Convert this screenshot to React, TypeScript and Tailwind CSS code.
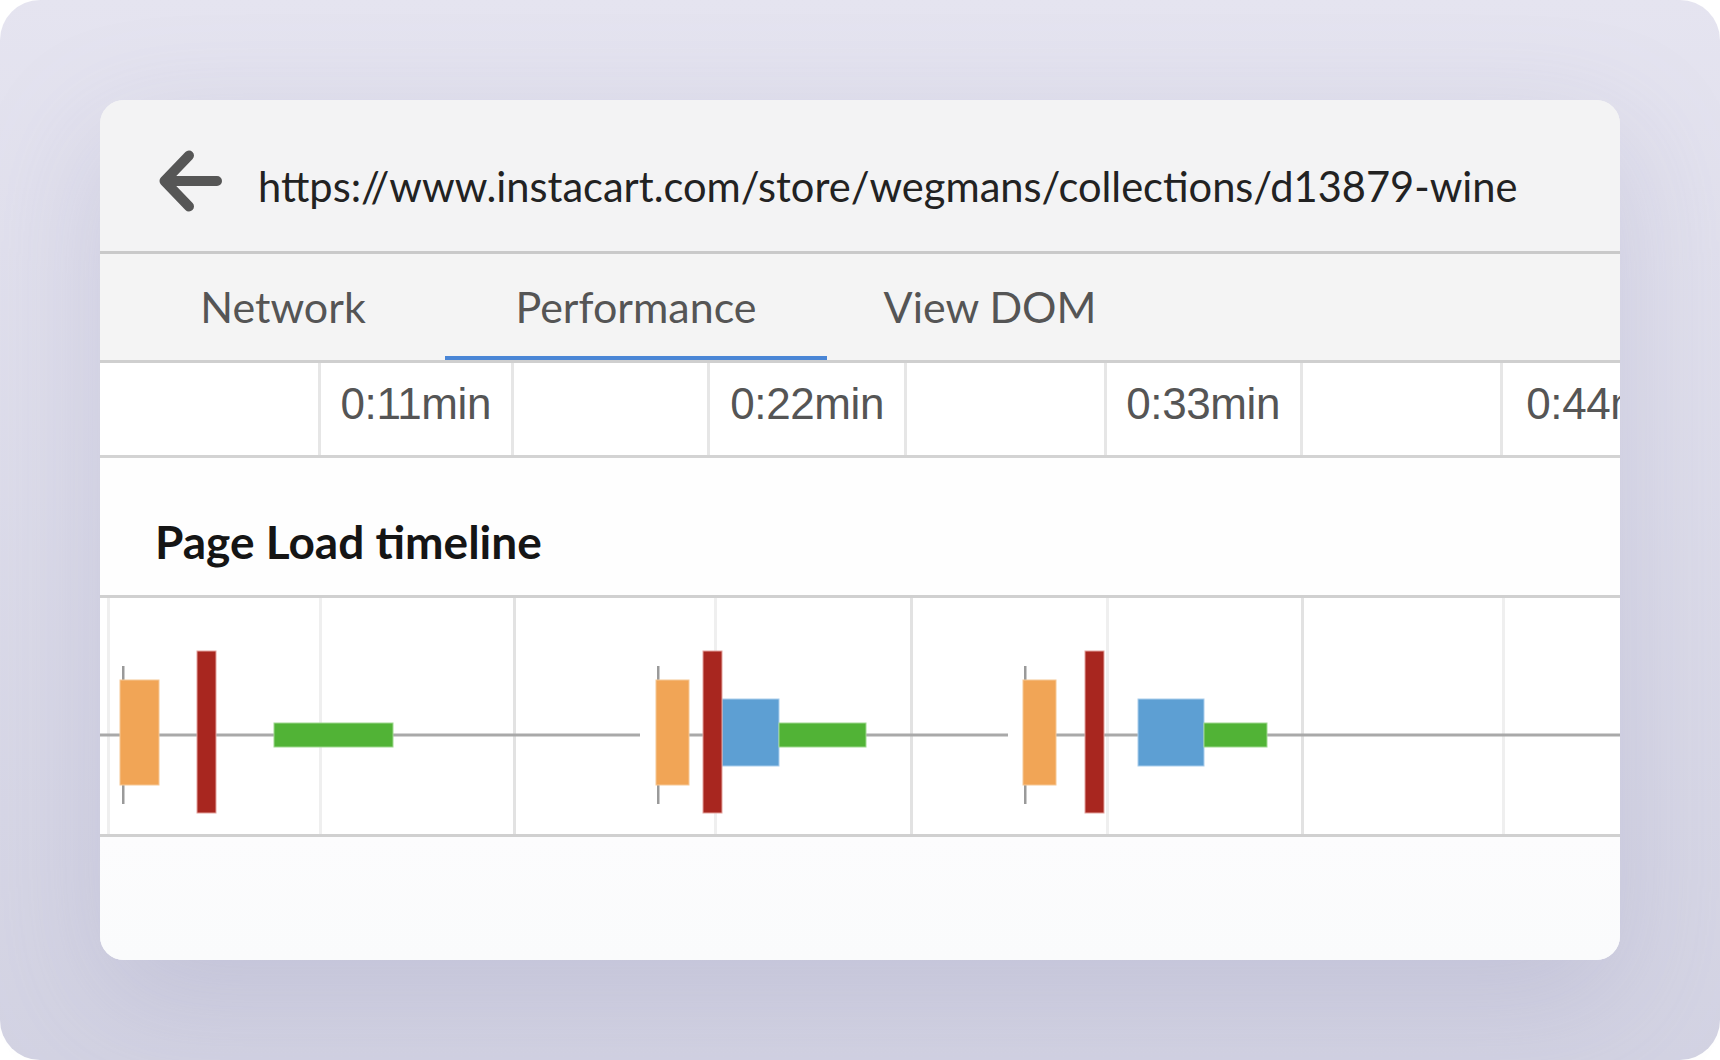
import React from "react";

const gridX = [8, 220, 414, 615, 811, 1007, 1202, 1403];
const darkGrid = new Set([414, 811, 1202]);

type Group = {
  whisker: number;
  orange: [number, number];
  red: [number, number];
  blue?: [number, number];
  green: [number, number];
};

const groups: Group[] = [
  { whisker: 23, orange: [20, 59], red: [97, 116], green: [174, 293] },
  { whisker: 558, orange: [556, 589], red: [603, 622], blue: [622, 679], green: [679, 766] },
  { whisker: 925, orange: [923, 956], red: [985, 1004], blue: [1038, 1104], green: [1104, 1167] },
];

function Chart() {
  return (
    <svg width="1520" height="236" viewBox="0 0 1520 236" className="block">
      {gridX.map((x) => (
        <rect key={x} x={x - 1} y={0} width={3} height={236} fill={darkGrid.has(x) ? "#e2e2e2" : "#efefef"} />
      ))}
      <rect x={0} y={135.5} width={540} height={3} fill="#a9a9a9" />
      <rect x={556} y={135.5} width={352} height={3} fill="#a9a9a9" />
      <rect x={923} y={135.5} width={597} height={3} fill="#a9a9a9" />
      {groups.map((g, i) => (
        <g key={i}>
          <rect x={g.whisker - 1} y={68} width={2.5} height={138} fill="#9a9a9a" />
          <rect x={g.orange[0]} y={82} width={g.orange[1] - g.orange[0]} height={105} fill="#f1a556" stroke="#f6c794" strokeWidth={1} />
          {g.blue && (
            <rect x={g.blue[0]} y={101} width={g.blue[1] - g.blue[0]} height={67} fill="#5d9fd3" stroke="#a9cdec" strokeWidth={1} />
          )}
          <rect x={g.green[0]} y={125} width={g.green[1] - g.green[0]} height={24} fill="#51b336" stroke="#9fd88f" strokeWidth={1} />
          <rect x={g.red[0]} y={53} width={g.red[1] - g.red[0]} height={162} fill="#a8261f" stroke="#e3a29d" strokeWidth={1} />
        </g>
      ))}
    </svg>
  );
}

const axisCells: { w: string; label?: string }[] = [
  { w: "w-[221px]" },
  { w: "w-[193px]", label: "0:11min" },
  { w: "w-[196px]" },
  { w: "w-[197px]", label: "0:22min" },
  { w: "w-[200px]" },
  { w: "w-[196px]", label: "0:33min" },
  { w: "w-[200px]" },
  { w: "w-[197px]", label: "0:44min" },
];

export default function App() {
  return (
    <div className="w-[1720px] h-[1060px] bg-white">
      <div className="w-full h-full rounded-[40px] bg-gradient-to-b from-[#e5e4f0] to-[#d3d3e3] pl-[100px] pt-[100px]">
        <div className="w-[1520px] h-[860px] rounded-[24px] overflow-hidden flex flex-col bg-gradient-to-b from-[#f3f3f4] to-[#fbfbfd] shadow-[0_40px_120px_rgba(140,140,180,0.25)]">
          {/* Header */}
          <div className="h-[151px] shrink-0 flex items-start pl-[59px] bg-[#f3f3f4]">
            <svg width="64" height="62" viewBox="0 0 64 62" className="shrink-0 mt-[50px]">
              <path d="M58 31 H7 M30 5.5 L5.5 31 L30 56.5" fill="none" stroke="#565656" strokeWidth="10" strokeLinecap="round" strokeLinejoin="round" />
            </svg>
            <div className="ml-[35px] mt-[66px] text-[41.6px] leading-none text-[#222] font-['Lato','Liberation_Sans',sans-serif] whitespace-nowrap">
              https://www.instacart.com/store/wegmans/collections/d13879-wine
            </div>
          </div>
          <div className="h-[3px] shrink-0 bg-[#c9c9c9]" />
          {/* Tabs */}
          <div className="h-[106px] shrink-0 bg-[#f4f4f4] flex pl-[21px] font-['Lato','Liberation_Sans',sans-serif] text-[43px] text-[#555]">
            <div className="w-[324px] flex items-center justify-center pt-[1px]">Network</div>
            <div className="w-[382px] flex flex-col">
              <div className="flex-1 flex items-center justify-center pt-[5px]">Performance</div>
              <div className="h-[4px] bg-[#4a86d6]" />
            </div>
            <div className="w-[326px] flex items-center justify-center pt-[1px]">View DOM</div>
          </div>
          <div className="h-[3px] shrink-0 bg-[#cfcfcf]" />
          {/* Axis */}
          <div className="h-[92px] shrink-0 bg-white flex font-['Liberation_Sans','Arial',sans-serif] text-[44px] text-[#555] tracking-[-0.4px] overflow-hidden">
            {axisCells.map((c, i) => (
              <div
                key={i}
                className={`${c.w} shrink-0 h-full flex items-center justify-end pr-[20px] pb-[10px] ${i < axisCells.length - 1 ? "border-r-[3px] border-[#e6e6e6]" : ""}`}
              >
                {c.label ? <span className="whitespace-nowrap">{c.label}</span> : null}
              </div>
            ))}
          </div>
          <div className="h-[3px] shrink-0 bg-[#d3d3d3]" />
          {/* Title */}
          <div className="h-[137px] shrink-0 bg-[#fefefe] pl-[55px] pt-[61px]">
            <div className="font-['Lato','Liberation_Sans',sans-serif] font-bold text-[46px] leading-none text-[#151515]">
              Page Load timeline
            </div>
          </div>
          <div className="h-[3px] shrink-0 bg-[#d0d0d0]" />
          {/* Chart */}
          <div className="h-[236px] shrink-0 bg-white">
            <Chart />
          </div>
          <div className="h-[3px] shrink-0 bg-[#d0d0d0]" />
          <div className="flex-1 bg-gradient-to-b from-[#fcfcfd] to-[#fafbfc]" />
        </div>
      </div>
    </div>
  );
}
